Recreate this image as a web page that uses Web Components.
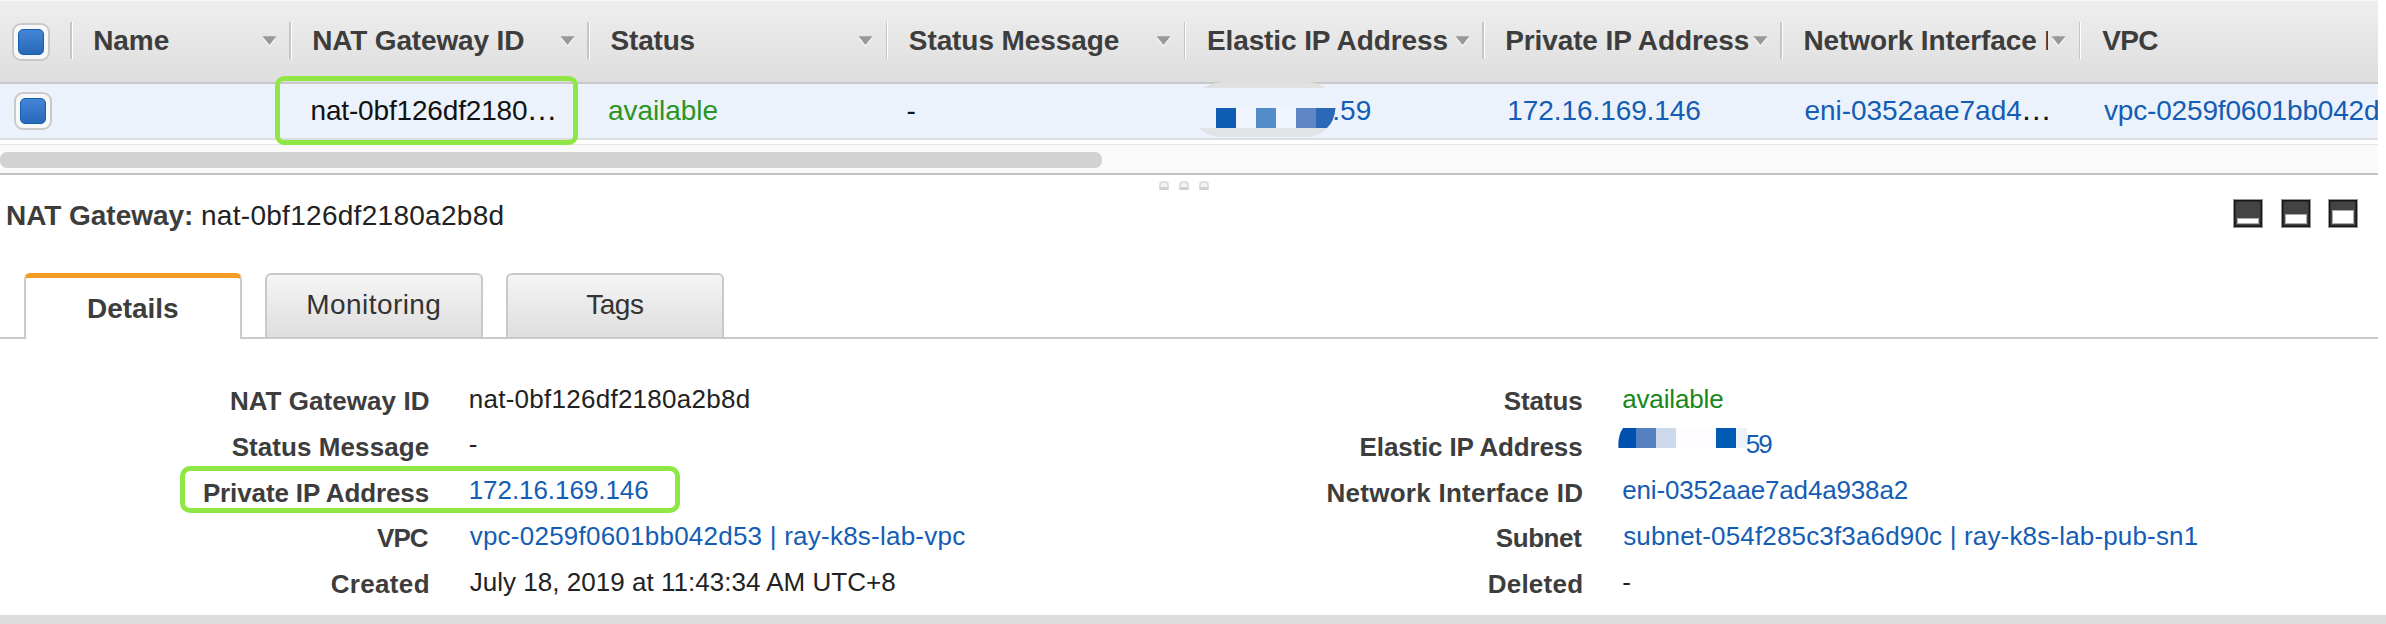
<!DOCTYPE html>
<html lang="en">
<head>
<meta charset="utf-8">
<title>NAT Gateways</title>
<style>
html,body{margin:0;height:100%;overflow:hidden;background:#fff}
body{font-family:"Liberation Sans",Arial,sans-serif}
</style>
</head>
<body>
<nat-console></nat-console>
<script>
const define = (name, css, html, setup) => {
  const tpl = document.createElement('template');
  tpl.innerHTML = `<style>${css}</style>${html}`;
  customElements.define(name, class extends HTMLElement {
    connectedCallback() {
      if (this.shadowRoot) return;
      this.attachShadow({ mode: 'open' }).append(tpl.content.cloneNode(true));
      if (setup) setup.call(this);
    }
  });
};

/* Text tracked so that its visible glyphs span exactly the "ink" width. */
const pen = document.createElement('canvas').getContext('2d');
define('tracked-text', `:host{display:block;flex:none;white-space:pre;line-height:var(--lh,32px)}`, `<slot></slot>`, function () {
  const ink = parseFloat(this.getAttribute('ink'));
  const cs = getComputedStyle(this), text = this.textContent;
  pen.font = `${cs.fontWeight} ${cs.fontSize} "Liberation Sans"`;
  const m = pen.measureText(text);
  const natural = m.actualBoundingBoxRight + m.actualBoundingBoxLeft;
  const gap = ink && text.length > 1 ? (ink - natural) / (text.length - 1) : 0;
  this.style.letterSpacing = gap + 'px';
  this.style.marginLeft = m.actualBoundingBoxLeft + 'px';
  this.style.marginRight = (m.actualBoundingBoxRight - m.width - gap) + 'px';
});

define('check-box', `:host{display:block;box-sizing:border-box;width:38px;height:38px;border:2px solid #c9c9c9;border-radius:9px;background:#f8f8f8;padding:4px}
i{display:block;box-sizing:border-box;width:26px;height:26px;border-radius:5px;border:1px solid #1260b4;background:linear-gradient(#4585d6,#2868b8)}`, `<i></i>`);

define('head-cell', `:host{display:flex;position:relative;height:81px;min-width:0;font-size:28px;font-weight:bold;color:#3d3d3d}
.sep{flex:none;width:1.5px;height:37px;margin-top:21px;background:#c6c6c6;border-right:1.5px solid #fff}
.label{flex:none;width:var(--clip,244px);padding-left:var(--x,21.2px);box-sizing:border-box;margin-top:24px;overflow:hidden;height:36px}
svg{position:absolute;right:12.5px;top:35px}
:host([plain]) svg{display:none}`,
`<span class="sep"></span><div class="label"><slot></slot></div><svg width="15" height="11" viewBox="0 0 15 11"><path d="M.5 2h14l-7 8.7z" fill="#f8f8f8"/><path d="M.5.3h14l-7 8.7z" fill="#999"/></svg>`);

define('body-cell', `:host{display:flex;position:relative;height:54px;min-width:0;box-sizing:border-box;padding-top:11px;padding-left:var(--x,23px);font-size:28px;color:#111}
:host([link]){color:#145db4}:host([ok]){color:#2a951f}`, `<slot></slot>`);

define('highlight-frame', `:host{display:block;position:absolute;box-sizing:border-box;border:5.4px solid #8ee745;border-radius:9px;pointer-events:none;z-index:2}`, ``);

define('gateway-table', `:host{display:block;width:2378px;overflow:hidden}
.head,.row{display:grid;grid-template-columns:70px 219px repeat(6,298.25px) 1fr}
.head{box-sizing:border-box;height:84px;border-top:1px solid #f8f8f8;border-bottom:2px solid #c8c8c8;background:linear-gradient(#eee,#dedede)}
.head>check-box{margin:22px 0 0 12px}
.row{height:54px;background:#ebf2fc;border-bottom:2px solid #dcdde0}
.row>check-box{margin:8px 0 0 14px}
highlight-frame{left:-14px;top:-8px;width:302.5px;height:69px}
.mask{position:absolute;left:14px;top:-2px}
.track{box-sizing:border-box;height:31px;margin-top:4px;padding-top:7px;border-top:1px solid #e6e6e6;border-bottom:2px solid #c4c4c4;background:#fafafa}
.thumb{width:1101.5px;height:16px;border-radius:7px;background:#d2d2d2}
.black{color:#111;padding-left:3.5px;font-size:31px;margin-top:-1px}`,
`<div class="head"><check-box></check-box>
<head-cell style="--clip:170px;--x:21.7px"><tracked-text ink="74.5">Name</tracked-text></head-cell>
<head-cell style="--x:21.7px"><tracked-text ink="211">NAT Gateway ID</tracked-text></head-cell>
<head-cell style="--x:20.8px"><tracked-text ink="84">Status</tracked-text></head-cell>
<head-cell style="--x:20.8px"><tracked-text ink="210">Status Message</tracked-text></head-cell>
<head-cell style="--clip:266px;--x:21.7px"><tracked-text ink="241">Elastic IP Address</tracked-text></head-cell>
<head-cell style="--clip:268px;--x:21.7px"><tracked-text ink="244">Private IP Address</tracked-text></head-cell>
<head-cell style="--clip:265px;--x:21.7px"><tracked-text ink="267.5">Network Interface ID</tracked-text></head-cell>
<head-cell plain><tracked-text ink="56">VPC</tracked-text></head-cell></div>
<div class="row"><check-box></check-box><body-cell></body-cell>
<body-cell style="--x:22.5px"><tracked-text ink="215.5">nat-0bf126df2180</tracked-text><tracked-text class="black">…</tracked-text><highlight-frame></highlight-frame></body-cell>
<body-cell ok style="--x:21.7px"><tracked-text ink="108.5">available</tracked-text></body-cell>
<body-cell style="--x:22px"><tracked-text>-</tracked-text></body-cell>
<body-cell link style="--x:150.5px"><svg class="mask" width="140" height="58" viewBox="1198 82 140 58"><path d="M1203 88q10-6 22-6h80q14 0 21 6z" fill="#e1e1e1"/><path d="M1210 88h118q6 8 6 20v20h-124z" fill="#edf3fc"/><path d="M1199 128q9 9 24 9h82q13 0 23-9z" fill="#e1e4e6"/><path d="M1236 108h20v20h-20zM1276 108h20v20h-20z" fill="#f1f6fe"/><path d="M1216 108h20v20h-20z" fill="#0f5cb5"/><path d="M1256 108h20v20h-20z" fill="#528dc9"/><path d="M1296 108h20v20h-20z" fill="#5f87c5"/><path d="M1316 108h19.500q-1 13-8.500 20h-11z" fill="#2b69b7"/></svg><tracked-text ink="36.5">.59</tracked-text></body-cell>
<body-cell link style="--x:27.3px"><tracked-text ink="191">172.16.169.146</tracked-text></body-cell>
<body-cell link style="--x:25.3px"><tracked-text ink="215.6">eni-0352aae7ad4</tracked-text><tracked-text class="black">…</tracked-text></body-cell>
<body-cell link style="--x:25.5px"><tracked-text ink="274">vpc-0259f0601bb042d</tracked-text></body-cell></div>
<div class="track"><div class="thumb"></div></div>`);

define('pane-icon', `:host{display:flex;box-sizing:border-box;width:30px;height:29px;padding:0 3px 3px 3px;align-items:flex-end;background:#444;border:1px solid #999;box-shadow:inset 0 0 0 1.5px #161616}
i{display:block;width:100%;height:var(--fill);background:#fff;box-sizing:border-box;border:1px solid #aaa}`, `<i></i>`);

define('detail-tab', `:host{display:block;box-sizing:border-box;width:218px;height:64px;border:2px solid #c9c9c9;border-bottom:0;border-radius:6px 6px 0 0;background:linear-gradient(#f5f5f5,#dedede);font-size:28px;color:#333;padding-top:14px}
:host([active]){height:66px;border-top:5px solid #f59a23;background:#fff;font-weight:bold;color:#3d3d3d;padding-top:15px}
div{display:flex;justify-content:center}`, `<div><slot></slot></div>`);

define('detail-row', `:host{display:grid;position:relative;grid-template-columns:428.7px auto;column-gap:var(--gap,41px);height:45.7px;align-items:start;font-size:26px;--lh:30px;color:#222}
.label{display:flex;justify-content:flex-end;font-weight:bold;color:#3d3d3d;padding-top:2.4px}
.value{display:flex}
:host([link]) .value{color:#145db4}:host([ok]) .value{color:#16881a}`,
`<div class="label"><slot name="label"></slot></div><div class="value"><slot></slot></div>`);

define('detail-pane', `:host{display:flex;flex-direction:column;flex:1;width:2378px;position:relative}
.grip{position:absolute;left:1159px;top:6px;display:flex;gap:10px}
.grip i{box-sizing:border-box;width:10px;height:9px;border:2px solid #dedede;border-bottom:3px solid #d0d0d0;border-radius:4px 4px 1px 1px;background:#f4f4f4}
.bar{box-sizing:border-box;display:flex;justify-content:space-between;padding:24px 20px 0 7px;height:74px;font-size:28px;color:#222}
.title{display:flex;gap:11px;margin-top:1px}.title b{color:#3d3d3d}
.icons{display:flex;gap:17.5px}
.tabs{display:flex;gap:22.800px;box-sizing:border-box;height:66px;margin-top:24px;padding-left:24px;align-items:flex-start;background:linear-gradient(#c9c9c9,#c9c9c9) 0 64px/100% 2px no-repeat}
.grid{display:grid;grid-template-columns:1153.5px 1fr;padding-top:44.800px}
highlight-frame{left:180px;top:-9.300px;width:500px;height:47.6px;border-radius:10px}
.mask{position:absolute;left:464.500px;top:-1.500px}`,
`<div class="grip"><i></i><i></i><i></i></div>
<div class="bar"><div class="title"><b><tracked-text ink="184">NAT Gateway:</tracked-text></b><tracked-text ink="300.500">nat-0bf126df2180a2b8d</tracked-text></div>
<div class="icons"><pane-icon style="--fill:6px"></pane-icon><pane-icon style="--fill:10px"></pane-icon><pane-icon style="--fill:14px"></pane-icon></div></div>
<div class="tabs"><detail-tab active><tracked-text ink="90">Details</tracked-text></detail-tab><detail-tab><tracked-text ink="131">Monitoring</tracked-text></detail-tab><detail-tab><tracked-text ink="56.6">Tags</tracked-text></detail-tab></div>
<div class="grid"><div>
<detail-row><tracked-text slot="label" ink="197.8">NAT Gateway ID</tracked-text><tracked-text ink="279">nat-0bf126df2180a2b8d</tracked-text></detail-row>
<detail-row><tracked-text slot="label" ink="197">Status Message</tracked-text><tracked-text>-</tracked-text></detail-row>
<detail-row link><tracked-text slot="label" ink="226.2">Private IP Address</tracked-text><tracked-text ink="178.500">172.16.169.146</tracked-text><highlight-frame></highlight-frame></detail-row>
<detail-row link><tracked-text slot="label" ink="51.6">VPC</tracked-text><tracked-text ink="495.5">vpc-0259f0601bb042d53 | ray-k8s-lab-vpc</tracked-text></detail-row>
<detail-row><tracked-text slot="label" ink="97">Created</tracked-text><tracked-text ink="427">July 18, 2019 at 11:43:34 AM UTC+8</tracked-text></detail-row>
</div><div>
<detail-row ok><tracked-text slot="label" ink="78.500">Status</tracked-text><tracked-text ink="100">available</tracked-text></detail-row>
<detail-row link style="--gap:164.500px"><tracked-text slot="label" ink="223">Elastic IP Address</tracked-text><svg class="mask" width="130" height="20" viewBox="1618 428 130 20"><path d="M1623 428h13v20h-17.500q-1-12 4.500-20z" fill="#0050b0"/><path d="M1636 428h20v20h-20z" fill="#5580bf"/><path d="M1656 428h20v20h-20z" fill="#ccd9ea"/><path d="M1676 428h40v20h-40z" fill="#fdfdff"/><path d="M1716 428h20v20h-20z" fill="#005ab4"/><path d="M1736 428h11v20h-11z" fill="#edf1fa"/></svg><tracked-text ink="25.5">59</tracked-text></detail-row>
<detail-row link><tracked-text slot="label" ink="254.700">Network Interface ID</tracked-text><tracked-text ink="284.500">eni-0352aae7ad4a938a2</tracked-text></detail-row>
<detail-row link><tracked-text slot="label" ink="86.5">Subnet</tracked-text><tracked-text ink="574.500">subnet-054f285c3f3a6d90c | ray-k8s-lab-pub-sn1</tracked-text></detail-row>
<detail-row><tracked-text slot="label" ink="93.5">Deleted</tracked-text><tracked-text>-</tracked-text></detail-row>
</div></div>`);

define('nat-console', `:host{display:flex;flex-direction:column;width:2386px;height:624px;overflow:hidden;background:#fff}
footer{height:9px;background:#ddd}`,
`<gateway-table></gateway-table><detail-pane></detail-pane><footer></footer>`);
</script>
</body>
</html>
